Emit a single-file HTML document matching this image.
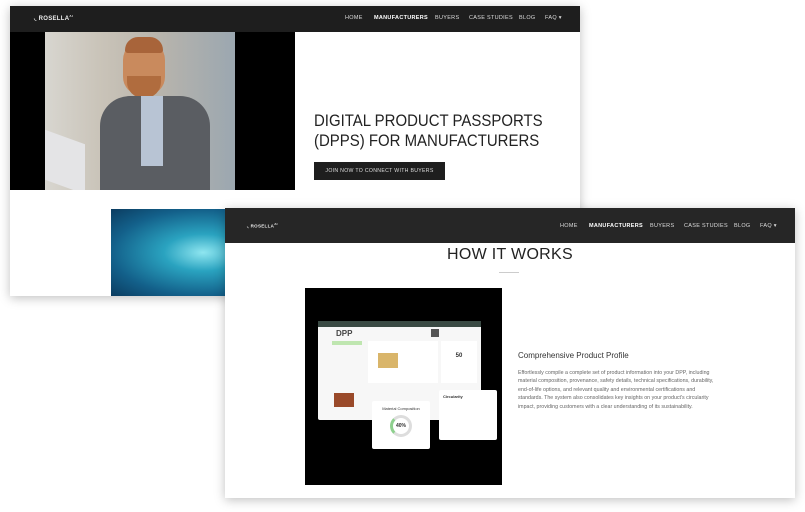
<!DOCTYPE html>
<html><head><style>
*{margin:0;padding:0;box-sizing:border-box}
body{width:805px;height:512px;background:#fff;position:relative;overflow:hidden;font-family:"Liberation Sans",sans-serif}
.card{position:absolute;background:#fff;box-shadow:0 2px 10px rgba(0,0,0,.25);overflow:hidden}
.nav{position:absolute;left:0;right:0;top:0;background:#1e1e1e;color:#ddd;font-size:5.5px;letter-spacing:.3px;white-space:nowrap}
.nav span{position:absolute}
.logo{font-weight:bold;color:#eee}
</style></head><body>

<div class="card" style="left:10px;top:6px;width:570px;height:290px">
  <div class="nav" style="height:26px">
    <span class="logo" style="left:24px;top:8px;font-size:6px">◟ ROSELLA<sup style="font-size:3px">AI</sup></span>
    <span style="left:335px;top:9px">HOME</span>
    <span style="left:364px;top:9px;color:#fff;font-weight:bold">MANUFACTURERS</span>
    <span style="left:425px;top:9px">BUYERS</span>
    <span style="left:459px;top:9px">CASE STUDIES</span>
    <span style="left:509px;top:9px">BLOG</span>
    <span style="left:535px;top:9px">FAQ ▾</span>
  </div>
  <div style="position:absolute;left:0;top:26px;width:285px;height:158px;background:#000"></div>
  <div style="position:absolute;left:35px;top:26px;width:190px;height:158px;overflow:hidden;background:linear-gradient(90deg,#d8d6d0 0%,#c9c3b8 30%,#b8b4ac 60%,#9ba7b0 100%)">
    <div style="position:absolute;left:78px;top:8px;width:42px;height:55px;border-radius:20px 20px 18px 18px;background:#c98a5d"></div>
    <div style="position:absolute;left:80px;top:5px;width:38px;height:16px;border-radius:18px 18px 4px 4px;background:#a8643a"></div>
    <div style="position:absolute;left:82px;top:44px;width:34px;height:22px;border-radius:0 0 16px 16px;background:#b06c3e"></div>
    <div style="position:absolute;left:55px;top:64px;width:110px;height:94px;border-radius:30px 30px 0 0;background:#5a5d62"></div>
    <div style="position:absolute;left:96px;top:64px;width:22px;height:70px;background:#b8c4d4"></div>
    <div style="position:absolute;left:0;top:105px;width:40px;height:50px;background:#e4e4e6;transform:skewY(20deg)"></div>
  </div>
  <div style="position:absolute;left:304px;top:105px;font-size:17px;line-height:20px;color:#222;white-space:nowrap;transform:scaleX(.88);transform-origin:left top">DIGITAL PRODUCT PASSPORTS<br>(DPPS) FOR MANUFACTURERS</div>
  <div style="position:absolute;left:304px;top:156px;width:131px;height:18px;background:#1e1e1e;color:#ddd;font-size:5.2px;letter-spacing:.3px;line-height:18px;text-align:center;white-space:nowrap">JOIN NOW TO CONNECT WITH BUYERS</div>
  <div style="position:absolute;left:101px;top:203px;width:115px;height:87px;background:radial-gradient(ellipse at 80% 50%,#8fe6f0 0%,#2aa3c0 30%,#13608a 70%,#0b3c60 100%)"></div>
</div>

<div class="card" style="left:225px;top:208px;width:570px;height:290px">
  <div class="nav" style="height:35px;background:#262626">
    <span class="logo" style="left:22px;top:14px;font-size:4.5px">◟ ROSELLA<sup style="font-size:3px">AI</sup></span>
    <span style="left:335px;top:15px">HOME</span>
    <span style="left:364px;top:15px;color:#fff;font-weight:bold">MANUFACTURERS</span>
    <span style="left:425px;top:15px">BUYERS</span>
    <span style="left:459px;top:15px">CASE STUDIES</span>
    <span style="left:509px;top:15px">BLOG</span>
    <span style="left:535px;top:15px">FAQ ▾</span>
  </div>
  <div style="position:absolute;left:0;right:0;top:38px;text-align:center;font-size:16px;color:#222;letter-spacing:.3px">HOW IT WORKS</div>
  <div style="position:absolute;left:274px;top:64px;width:20px;height:1px;background:#ccc"></div>
  <div style="position:absolute;left:80px;top:80px;width:197px;height:197px;background:#000">
    <div style="position:absolute;left:13px;top:33px;width:163px;height:99px;background:#f7f7f7;border-radius:2px">
      <div style="height:6px;background:#3a4a44"></div>
      <div style="position:absolute;left:18px;top:8px;font-size:8px;font-weight:bold;color:#444">DPP</div>
      <div style="position:absolute;left:113px;top:8px;width:8px;height:8px;background:#555"></div>
      <div style="position:absolute;left:14px;top:20px;width:30px;height:4px;background:#bfe6b0"></div>
      <div style="position:absolute;left:50px;top:20px;width:70px;height:42px;background:#fff"></div>
      <div style="position:absolute;left:60px;top:32px;width:20px;height:15px;background:#d9b56a"></div>
      <div style="position:absolute;left:123px;top:20px;width:36px;height:42px;background:#fff;font-size:6px;font-weight:bold;color:#333;text-align:center;padding-top:12px">50</div>
      <div style="position:absolute;left:16px;top:72px;width:20px;height:14px;background:#9a4a2a"></div>
    </div>
    <div style="position:absolute;left:67px;top:113px;width:58px;height:48px;background:#fff;border-radius:2px;font-size:4px;text-align:center;color:#333;padding-top:5px">Material Composition
      <div style="margin:4px auto 0;width:22px;height:22px;border-radius:50%;border:3px solid #ddd;border-left-color:#8ed08e;font-size:5px;font-weight:bold;line-height:16px">40%</div></div>
    <div style="position:absolute;left:134px;top:102px;width:58px;height:50px;background:#fff;border-radius:2px;font-size:4px;font-weight:bold;color:#333;padding:4px">Circularity</div>
  </div>
  <div style="position:absolute;left:293px;top:143px;font-size:8px;color:#333">Comprehensive Product Profile</div>
  <div style="position:absolute;left:293px;top:161px;width:200px;font-size:5.3px;line-height:8.4px;color:#666">Effortlessly compile a complete set of product information into your DPP, including material composition, provenance, safety details, technical specifications, durability, end-of-life options, and relevant quality and environmental certifications and standards. The system also consolidates key insights on your product's circularity impact, providing customers with a clear understanding of its sustainability.</div>
</div>
</body></html>
